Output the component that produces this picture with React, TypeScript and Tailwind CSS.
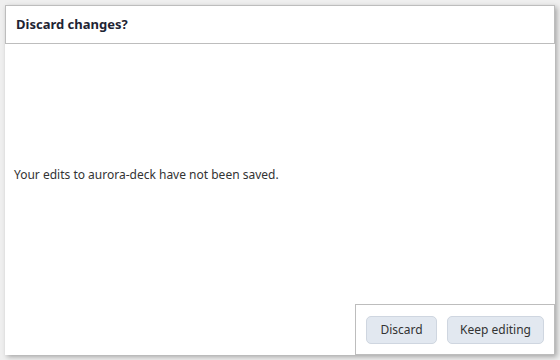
export default function App() {
  return (
    <div className="w-[560px] h-[360px] bg-[#efefef] p-[5px]" style={{ fontFamily: '"Noto Sans", sans-serif' }}>
      <div className="w-[550px] h-[350px] bg-white flex flex-col shadow-[2px_2px_5px_rgba(0,0,0,0.3)]">
        <div className="h-[39px] border border-[#bdbdbd] flex items-center px-[10px] text-[13px] font-bold text-[#1e2433]">
          Discard changes?
        </div>
        <div className="flex-1 flex items-center px-[9px] pt-[1px] text-[12px] text-[#333]">
          Your edits to aurora-deck have not been saved.
        </div>
        <div className="self-end w-[200px] h-[51px] border border-[#bdbdbd] flex items-center justify-end gap-[10px] pr-[10px]">
          <button className="w-[71px] h-[28px] rounded-[5px] bg-[#e2e8f0] border border-[#cfd6e0] text-[12px] text-[#333]">
            Discard
          </button>
          <button className="w-[97px] h-[28px] rounded-[5px] bg-[#e2e8f0] border border-[#cfd6e0] text-[12px] text-[#333]">
            Keep editing
          </button>
        </div>
      </div>
    </div>
  );
}
